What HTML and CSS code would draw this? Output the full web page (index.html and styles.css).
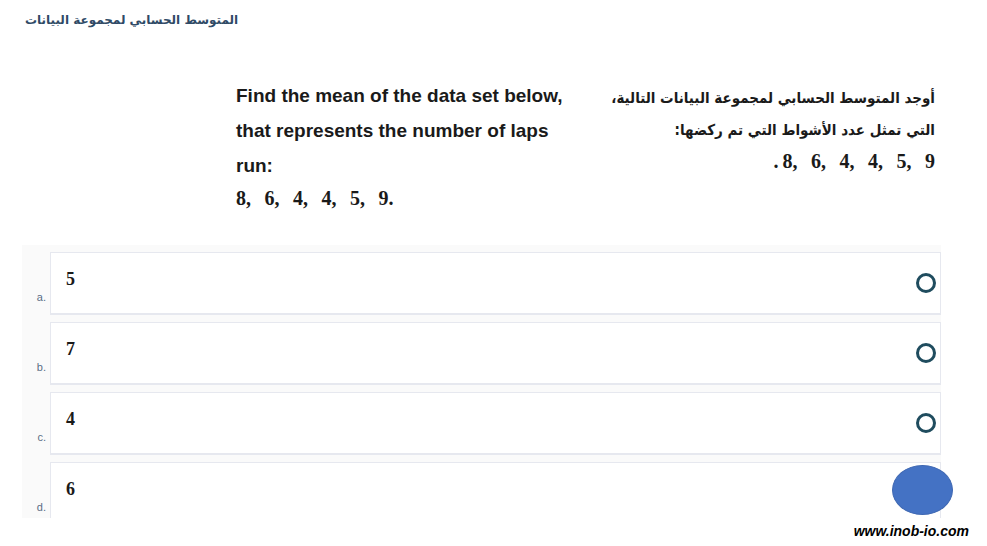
FILE: index.html
```html
<!DOCTYPE html>
<html lang="ar">
<head>
<meta charset="utf-8">
<title>المتوسط الحسابي لمجموعة البيانات</title>
<link rel="stylesheet" href="styles.css">
</head>
<body>
<div class="page">
  <header class="title"><span dir="rtl">المتوسط الحسابي لمجموعة البيانات</span></header>

  <section class="question">
    <div class="en">
      <p class="line">Find the mean of the data set below,</p>
      <p class="line">that represents the number of laps</p>
      <p class="line">run:</p>
      <p class="nums">8, 6, 4, 4, 5, 9.</p>
    </div>
    <div class="ar" dir="rtl">
      <p class="line">أوجد المتوسط الحسابي لمجموعة البيانات التالية،</p>
      <p class="line">التي تمثل عدد الأشواط التي تم ركضها:</p>
      <p class="nums"><span dir="ltr"><span class="dot">.</span>8, 6, 4, 4, 5, 9</span></p>
    </div>
  </section>

  <section class="answers">
    <div class="option">
      <span class="letter">a.</span>
      <div class="box"><span class="val">5</span><span class="radio"></span></div>
    </div>
    <div class="option">
      <span class="letter">b.</span>
      <div class="box"><span class="val">7</span><span class="radio"></span></div>
    </div>
    <div class="option">
      <span class="letter">c.</span>
      <div class="box"><span class="val">4</span><span class="radio"></span></div>
    </div>
    <div class="option">
      <span class="letter">d.</span>
      <div class="box"><span class="val">6</span><span class="radio"></span></div>
    </div>
  </section>

  <footer class="site">www.inob-io.com</footer>

  <div class="mark"></div>
</div>
</body>
</html>
```

FILE: styles.css
```css
* { box-sizing: border-box; }
html, body { margin: 0; padding: 0; background: #ffffff; }
body { width: 987px; height: 546px; overflow: hidden; font-family: "Liberation Sans", Arial, sans-serif; }
.page { position: relative; width: 987px; height: 546px; }
p { margin: 0; white-space: nowrap; }

.title {
  padding: 12px 0 0 25px;
  height: 28px;
  font-family: "DejaVu Sans", sans-serif;
  font-weight: bold;
  font-size: 12px;
  line-height: 16px;
  color: #2f4a66;
  white-space: nowrap;
}

.question {
  display: flex;
  justify-content: space-between;
  align-items: flex-start;
  margin-top: 50px;
  padding: 0 52px 0 236px;
}
.en .line {
  font-weight: bold;
  font-size: 19px;
  line-height: 35px;
  color: #1a1a1a;
}
.en .nums, .ar .nums {
  font-family: "Liberation Serif", "Times New Roman", serif;
  font-weight: bold;
  font-size: 20px;
  line-height: 31px;
  word-spacing: 8.5px;
  color: #1a1a1a;
}
.ar { padding-top: 5px; text-align: right; }
.ar .line {
  font-family: "DejaVu Sans Condensed", "DejaVu Sans", sans-serif;
  font-stretch: condensed;
  font-weight: bold;
  font-size: 15px;
  line-height: 31.5px;
  color: #1a1a1a;
}
.ar .nums { line-height: 31.5px; }
.dot { margin-right: 4px; }

.answers {
  margin: 31px 46px 0 22px;
  padding-top: 7px;
  height: 273px;
  overflow: hidden;
  background: #fafafa;
}
.option {
  display: flex;
  align-items: flex-end;
  margin-bottom: 7px;
}
.letter {
  width: 28px;
  padding: 0 4px 11px 0;
  text-align: right;
  font-size: 11px;
  line-height: 14px;
  color: #5b6e86;
}
.box {
  flex: 1;
  height: 63px;
  background: #ffffff;
  border: 1px solid #e6e8ef;
  border-bottom-width: 2px;
  display: flex;
  align-items: center;
  justify-content: space-between;
  padding: 0 4px 0 15px;
}
.val {
  align-self: flex-start;
  padding-top: 16px;
  font-family: "Liberation Serif", "Times New Roman", serif;
  font-weight: bold;
  font-size: 18px;
  line-height: 20px;
  color: #1a1a1a;
}
.radio {
  width: 20px;
  height: 20px;
  border: 3px solid #1f4c5e;
  border-radius: 50%;
}

.site {
  text-align: right;
  padding: 5px 18px 0 0;
  font-weight: bold;
  font-style: italic;
  font-size: 14px;
  line-height: 16px;
  color: #000000;
}

.mark {
  position: absolute;
  left: 892px;
  top: 465px;
  width: 61px;
  height: 50px;
  border-radius: 50%;
  background: #4472c4;
  border: 1px solid #3f68b2;
}
```
